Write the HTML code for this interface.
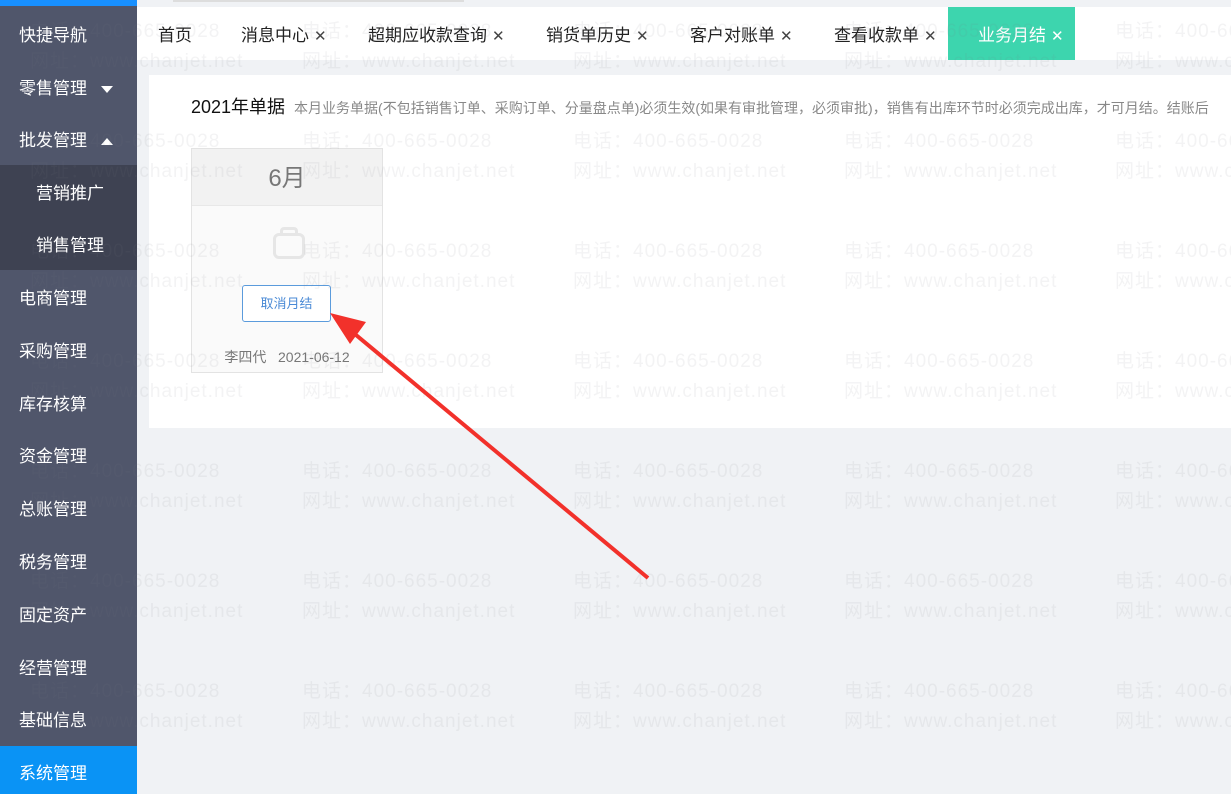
<!DOCTYPE html>
<html><head><meta charset="utf-8"><style>
*{margin:0;padding:0;box-sizing:border-box}
html,body{width:1231px;height:794px;overflow:hidden}
body{background:#f0f2f5;font-family:"Liberation Sans","Noto Sans CJK SC",sans-serif;position:relative}
#side{position:absolute;left:0;top:0;width:137px;height:794px;background:#50566b}
#side .top{height:6px;background:#1890ff}
.it{position:absolute;left:0;width:137px;height:53px;line-height:55px;color:#fff;font-size:17px;padding-left:19px}
.sub{padding-left:36px}
.act{background:#0a93f5}
.tri{display:inline-block;width:0;height:0;border-left:6px solid transparent;border-right:6px solid transparent;margin-left:14px;vertical-align:middle}
#bar{position:absolute;left:137px;top:7px;width:1094px;height:53px;background:#fff}
.tab{position:absolute;top:0;height:53px;line-height:57px;font-size:17px;color:#222}
.tab span{font-size:15px;margin-left:5px;color:#444}
#panel{position:absolute;left:149px;top:75px;width:1082px;height:353px;background:#fff;overflow:hidden}
#card{position:absolute;left:191px;top:148px;width:192px;height:225px;border:1px solid #e3e3e3;background:#fafafa}
#wm{position:absolute;left:0;top:0;width:1231px;height:794px;pointer-events:none;overflow:hidden}
.w{position:absolute;font-size:19px;color:rgba(120,120,130,0.09);letter-spacing:1px;white-space:nowrap;line-height:30px}
</style></head><body>
<div id="side"><div class="top"></div>
<div class="it" style="top:8px">快捷导航</div>
<div class="it" style="top:61px">零售管理<span class="tri" style="border-top:7px solid #fff"></span></div>
<div class="it" style="top:113px">批发管理<span class="tri" style="border-bottom:7px solid #fff"></span></div>
<div style="position:absolute;top:165px;left:0;width:137px;height:105px;background:#3e4252"></div>
<div class="it sub" style="top:166px">营销推广</div>
<div class="it sub" style="top:218px">销售管理</div>
<div class="it" style="top:271px">电商管理</div>
<div class="it" style="top:324px">采购管理</div>
<div class="it" style="top:377px">库存核算</div>
<div class="it" style="top:429px">资金管理</div>
<div class="it" style="top:482px">总账管理</div>
<div class="it" style="top:535px">税务管理</div>
<div class="it" style="top:588px">固定资产</div>
<div class="it" style="top:641px">经营管理</div>
<div class="it" style="top:693px">基础信息</div>
<div class="it act" style="top:746px;height:48px;line-height:55px">系统管理</div>
</div>
<div style="position:absolute;left:173px;top:0;width:291px;height:2px;background:#ddd"></div>
<div id="bar">
<div class="tab" style="left:21px">首页</div>
<div class="tab" style="left:104px">消息中心<span>✕</span></div>
<div class="tab" style="left:231px">超期应收款查询<span>✕</span></div>
<div class="tab" style="left:409px">销货单历史<span>✕</span></div>
<div class="tab" style="left:553px">客户对账单<span>✕</span></div>
<div class="tab" style="left:697px">查看收款单<span>✕</span></div>
<div class="tab" style="left:811px;width:127px;background:#3dd5ae;color:#fff;padding-left:30px">业务月结<span style="color:#fff">✕</span></div>
</div>
<div id="panel">
<div style="position:absolute;left:42px;top:18px;font-size:18px;color:#111;white-space:nowrap">2021年单据 <span style="font-size:14px;color:#888;margin-left:4px">本月业务单据(不包括销售订单、采购订单、分量盘点单)必须生效(如果有审批管理，必须审批)，销售有出库环节时必须完成出库，才可月结。结账后</span></div>
</div>
<div id="card">
<div style="height:57px;background:#f2f2f2;border-bottom:1px solid #e8e8e8;text-align:center;line-height:60px;font-size:24px;color:#777">6月</div>
<div style="position:absolute;left:81px;top:84px;width:32px;height:26px;border:3px solid #e6e6e6;border-radius:6px"></div>
<div style="position:absolute;left:88px;top:78px;width:18px;height:9px;border:3px solid #e6e6e6;border-bottom:none;border-radius:4px 4px 0 0"></div>
<div style="position:absolute;left:50px;top:136px;width:89px;height:37px;border:1px solid #5b9bdc;border-radius:3px;background:#fff;color:#4a8ad6;font-size:13px;text-align:center;line-height:35px">取消月结</div>
<div style="position:absolute;left:0;top:198px;width:100%;text-align:center;font-size:14px;color:#777">李四代&nbsp;&nbsp; 2021-06-12</div>
</div>
<div id="wm">
<script>
var h='';var xs=[30,302,573,844,1115];var ys=[30,140,250,360,470,580,690];
for(var i=0;i<ys.length;i++)for(var j=0;j<xs.length;j++){h+='<div class="w" style="left:'+xs[j]+'px;top:'+(ys[i]-13)+'px">电话：400-665-0028<br>网址：www.chanjet.net</div>';}
document.write(h);
</script>
</div>
<svg style="position:absolute;left:0;top:0" width="1231" height="794">
<line x1="648" y1="578" x2="350" y2="330" stroke="#f2312b" stroke-width="4"/>
<polygon points="330,313 366,322 350,344" fill="#f2312b"/>
</svg>
</body></html>
